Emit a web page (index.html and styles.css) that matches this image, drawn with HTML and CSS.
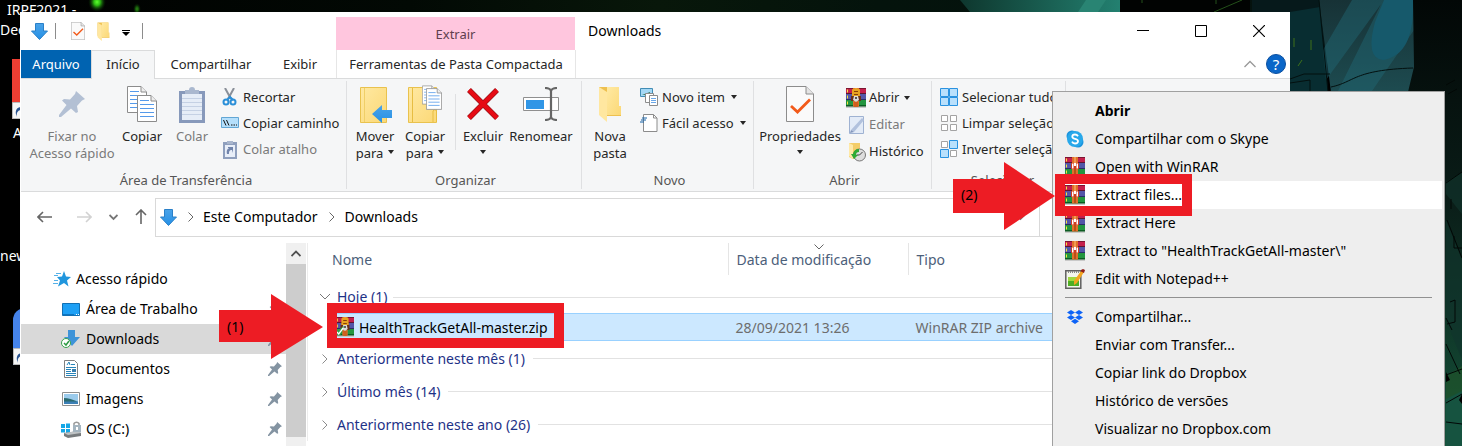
FILE: index.html
```
<!DOCTYPE html>
<html lang="pt-BR">
<head>
<meta charset="utf-8">
<title>Downloads</title>
<link rel="stylesheet" href="styles.css">
</head>
<body>
<svg class="defs" aria-hidden="true">
  <defs>
    <linearGradient id="g-folder" x1="0" y1="0" x2="1" y2="1"><stop offset="0" stop-color="#ffe9a2"/><stop offset="1" stop-color="#fbd876"/></linearGradient>
    <linearGradient id="g-blue" x1="0" y1="0" x2="0" y2="1"><stop offset="0" stop-color="#4aa3e8"/><stop offset="1" stop-color="#2590e6"/></linearGradient>
    <symbol id="i-down" viewBox="0 0 17 17"><path d="M4.500.5h8v7.500h4L8.500 16.500.5 8h4z" fill="url(#g-blue)" stroke="#2a80c8"/></symbol>
    <symbol id="i-rar" viewBox="0 0 20 20">
      <path d="M0 17.500h20V20H0z" fill="#c9c9c9"/>
      <path d="M0 0h20v6H0z" fill="#c41f4c"/><path d="M0 0h20v1H0z" fill="#7c1531"/><path d="M0 5h20v1H0z" fill="#5e1630"/>
      <path d="M0 6h20v6H0z" fill="#5356a8"/><path d="M0 11h20v1H0z" fill="#2b2d68"/>
      <path d="M0 12h20v6H0z" fill="#23953f"/><path d="M0 17h20v1.500H0z" fill="#0d5c22"/>
      <path d="M1 1.500h1v3H1zM1 7.500h1v3H1zM1 13.500h1v3H1z" fill="#f4e43a"/>
      <path d="M7 0h6v18.500H7z" fill="#e0702a"/><path d="M9 0h2v6H9z" fill="#f29a50"/>
      <path d="M6 6h8v6H6z" fill="#cf3d20"/><path d="M7 6.500h1.500v5H7zM11.500 6.500H13v5h-1.500zM9 6h2v3H9z" fill="#fff"/>
      <path d="M9 12h2v6H9z" fill="#b85018"/>
    </symbol>
    <symbol id="i-rarlock" viewBox="0 0 20 20">
      <use href="#i-rar"/>
      <path d="M6 1.500Q10-1 14 1.500V9H6z" fill="#e7a321"/><path d="M8 3h4v1H8zM8 6h4v1H8z" fill="#8a3d08"/>
      <path d="M5 8h10v5H5z" fill="#6b3019"/><path d="M8 8h4l1 4-3 2-3-2z" fill="#dcdcdc"/><path d="M9 9h2v2H9z" fill="#555"/>
      <path d="M8 14h4v5H8z" fill="#ce5f1e"/>
    </symbol>
    <symbol id="i-doccheck" viewBox="0 0 28 36">
      <path d="M.5.5h19.500l7.500 7.500v27.500H.5z" fill="#fafafa" stroke="#8c8c8c"/><path d="M20 .5V8h7.500" fill="#e4e4e4" stroke="#8c8c8c"/>
      <path d="M5 20l6.500 6L24 13.500" fill="none" stroke="#f25a1a" stroke-width="2.800"/>
    </symbol>
    <symbol id="i-folder" viewBox="0 0 24 36">
      <path d="M1 1h20v27h2v2H9L1 26z" fill="#eec04f"/><path d="M9 1h12v19h2v9H9z" fill="url(#g-folder)"/><path d="M1 1l8 5v30l-8-7z" fill="#ffe7a0"/>
    </symbol>
    <symbol id="i-page" viewBox="0 0 20 27">
      <path d="M.5.5H14l5.500 5.500v20.500H.5z" fill="#fff" stroke="#8c8c8c"/><path d="M14 .5V6h5.500" fill="#eee" stroke="#8c8c8c"/>
      <path d="M3 5.500h9M3 9.500h14M3 13.500h14M3 17.500h14M3 21.500h14" stroke="#559aea"/>
    </symbol>
    <symbol id="i-pin" viewBox="0 0 26 26"><path d="M17 0l9 8-3 1.500-5 5.500 1 6-2 1-5-4.500L2 26H0v-2l7.500-10L3 9.500 5 8l6 .5L16 3z"/></symbol>
    <symbol id="i-shortcut" viewBox="0 0 16 17"><path d="M.5.5h15v16H.5z" fill="#f5f5f5" stroke="#bbb"/><path d="M5 15C2 9 5 5 9 5V2l6 5-6 4V8c-3 0-5 3-4 7z" fill="#28518f"/></symbol>
    <symbol id="i-chev" viewBox="0 0 8 12"><path d="M1.500 1.500L6 6l-4.500 4.500" fill="none" stroke="currentColor"/></symbol>
  </defs>
</svg>

<svg class="wallpaper" viewBox="0 0 1462 446" preserveAspectRatio="xMaxYMin slice" aria-hidden="true">
  <defs>
    <linearGradient id="w-top" x1="0" x2="1" y1="0" y2="0"><stop offset="0" stop-color="#000"/><stop offset=".28" stop-color="#020904"/><stop offset=".45" stop-color="#08170a"/><stop offset=".6" stop-color="#04130c"/><stop offset="1" stop-color="#05110f"/></linearGradient>
    <linearGradient id="w-teal" x1="0" x2="1" y1="0" y2="0"><stop offset="0" stop-color="#0e372e"/><stop offset="1" stop-color="#238070"/></linearGradient>
    <linearGradient id="w-sky" x1="0" x2="0" y1="0" y2="1"><stop offset="0" stop-color="#173236"/><stop offset="1" stop-color="#1d4b50"/></linearGradient>
    <linearGradient id="w-side" x1="0" x2="0" y1="0" y2="1"><stop offset="0" stop-color="#020706"/><stop offset=".45" stop-color="#0a1d18"/><stop offset=".7" stop-color="#0f3527"/><stop offset="1" stop-color="#15523a"/></linearGradient>
    <radialGradient id="w-glow"><stop offset="0" stop-color="#5cff2e"/><stop offset=".35" stop-color="#2cba12"/><stop offset="1" stop-color="#062404" stop-opacity="0"/></radialGradient>
  </defs>
  <rect width="1462" height="446" fill="#000"/>
  <rect width="1462" height="12" fill="url(#w-top)"/>
  <ellipse cx="97" cy="2" rx="9" ry="10" fill="url(#w-glow)"/><ellipse cx="137" cy="9" rx="4" ry="6" fill="url(#w-glow)" opacity=".5"/>
  <path d="M960 0h160v12H970z" fill="url(#w-teal)"/><path d="M1086 0h20l-8 12h-20z" fill="#298473"/>
  <path d="M1120 0h130v12h-130z" fill="#010302"/><path d="M1214 12l28-12M1142 0v3M1216 0v4" stroke="#24501a" fill="none"/>
  <path d="M1252 0h75v92h-75z" fill="#06191b"/>
  <path d="M1290 12l30-5 8 84h-38z" fill="#082d31"/>
  <path d="M1319 0h96v92h-84z" fill="url(#w-sky)"/>
  <path d="M1352 0h32l-58 80-3-30zM1383 0h31v30l-42 61h-34z" fill="#216875" opacity=".45"/>
  <path d="M1384 0h29q2 55-30 60-18-2-8-38z" fill="#16596b"/>
  <path d="M1319 0l9 92M1290 79l14-5h26M1310 92v-12l-20 3M1331 87c24-5 22-17 82-19" fill="none" stroke="#03100f"/>
  <path d="M1294 38v9M1311 40v10M1298 66l4-6" stroke="#3e711b"/>
  <path d="M1413 0h49v446h-26V92h-28l6-25z" fill="url(#w-side)"/>
  <path d="M1446 182l16-10v42l-16-20zM1446 220l16 40v100l-16-40z" fill="#11342c" opacity=".65"/>
  <path d="M1446 376l16-10v80h-16z" fill="#235a27" opacity=".5"/><path d="M1446 399l16-8v55h-16z" fill="#165340"/>
  <path d="M1446 183l16-11M1447 220l15 38M1454 236v12h8M1451 199v10M1446 344l14 30M1450 302l5-2v22l-8 2M1446 318l6 12M1446 375l16-6M1446 403l16-9M1446 422l16 2M1446 85l9-5M1448 94l9-5" fill="none" stroke="#020806"/>
  <path d="M1446 372l4 8-4 2zM1462 394l-3 6 3 4z" fill="#000"/>
</svg>

<div class="desk-icon desk-a"><span>IRPF2021 -</span><span>Dec</span></div>
<div class="tile tile-red"><svg width="16" height="17"><use href="#i-shortcut"/></svg></div>
<span class="desk-icon desk-b">A</span>
<span class="desk-icon desk-c">new</span>
<div class="tile tile-blue"><svg width="16" height="17"><use href="#i-shortcut"/></svg></div>

<main class="window">
  <header class="titlebar">
    <div class="quick">
      <svg width="17" height="17"><use href="#i-down"/></svg><i class="qsep"></i>
      <button aria-label="Propriedades"><svg width="14" height="18"><use href="#i-doccheck"/></svg></button>
      <button aria-label="Nova pasta"><svg width="13" height="19" viewBox="0 0 24 36" preserveAspectRatio="none"><use href="#i-folder"/></svg></button>
      <button aria-label="Personalizar"><svg width="8" height="6"><path d="M0 0h8v1H0zM0 2h8L4 6z"/></svg></button><i class="qsep"></i>
    </div>
    <div class="context">Extrair</div>
    <h1>Downloads</h1>
    <div class="controls">
      <button aria-label="Minimizar"><svg width="12" height="12"><path d="M0 5.500h12" stroke="#000"/></svg></button>
      <button aria-label="Maximizar"><svg width="12" height="12"><path d="M.5.5h11v11H.5z" fill="none" stroke="#000"/></svg></button>
      <button aria-label="Fechar"><svg width="12" height="12"><path d="M0 0l12 12M12 0L0 12" stroke="#000" stroke-width="1.200"/></svg></button>
    </div>
  </header>

  <nav class="tabs">
    <button class="tab-file">Arquivo</button>
    <button class="tab-on">Início</button>
    <button class="tab-share">Compartilhar</button>
    <button class="tab-view">Exibir</button>
    <button class="tab-zip">Ferramentas de Pasta Compactada</button>
    <button class="collapse" aria-label="Recolher"><svg width="12" height="8"><path d="M.5 7L6 1.500 11.500 7" fill="none" stroke="#999" stroke-width="1.300"/></svg></button>
    <button class="help" aria-label="Ajuda">?</button>
  </nav>

  <section class="ribbon">
    <div class="group g-clip">
      <div class="tools">
        <button class="big w92 off"><span class="pic"><svg width="26" height="26" fill="#b3c0d4"><use href="#i-pin"/></svg></span>Fixar no<br>Acesso rápido</button>
        <button class="big w48"><span class="pic"><svg width="30" height="37"><use href="#i-page" width="20" height="27"/><use href="#i-page" x="10" y="9" width="20" height="27"/></svg></span>Copiar</button>
        <button class="big w52 off"><span class="pic"><svg width="26" height="37"><path d="M0 5h26v32H0z" fill="#8799bb"/><path d="M3 8h20v26H3z" fill="#e6edf7"/><path d="M3 12.500h20M3 16.500h20M3 20.500h20M3 24.500h20M3 28.500h20" stroke="#c5d1e4"/><path d="M6 4h4a3 3 0 0 1 6 0h4v4H6z" fill="#aab8cf"/></svg></span>Colar</button>
        <div class="stack">
          <button><svg width="18" height="18"><path d="M4 0l6 11M13 0L7 11" stroke="#8a9099" stroke-width="2" fill="none"/><circle cx="5" cy="14" r="2.500" fill="none" stroke="#2b8fd8" stroke-width="2"/><circle cx="12" cy="14" r="2.500" fill="none" stroke="#2b8fd8" stroke-width="2"/><path d="M6 12l3-3 3 3" fill="none" stroke="#2b8fd8" stroke-width="2"/></svg>Recortar</button>
          <button><svg width="18" height="12"><path d="M.5.5h17v10H.5z" fill="#b5dffb" stroke="#62a6d4"/><path d="M2.500 3L5 8.500M5.500 3L8 8.500M10 8h1.500M12.500 8H14M15 8h1" stroke="#111" fill="none"/></svg>Copiar caminho</button>
          <button class="off"><svg width="18" height="19"><path d="M2 2h14v17H2z" fill="#8f9fbd"/><path d="M4 5h10v12H4z" fill="#e8eef8"/><path d="M6 1h6v3H6z" fill="#a9b6cd"/><path d="M6 14c-1-4 1-6 3-6H7V7h5v6l-1-3c-3 0-3 2-3 4z" fill="#7184ab"/></svg>Colar atalho</button>
        </div>
      </div>
      <h2>Área de Transferência</h2>
    </div>
    <div class="group g-org">
      <div class="tools">
        <button class="big w50"><span class="pic"><svg width="34" height="38"><path d="M2.500 2.500h26v35h-26z" fill="url(#g-folder)" stroke="#e9c24e"/><path d="M6.500 3v34" stroke="#f0cf68"/><path d="M14 29l10-9v5h10v8H24v5z" fill="url(#g-blue)"/></svg></span>Mover<br><span>para<i class="caret"></i></span></button>
        <button class="big w50"><span class="pic"><svg width="34" height="38"><path d="M.5 2.500h28v35H.5z" fill="url(#g-folder)" stroke="#e9c24e"/><path d="M4.500 3v34M25 37V26q2-3 3.500 0v11" fill="none" stroke="#e7bd42"/><use href="#i-page" x="14" width="14" height="20"/><use href="#i-page" x="18" y="3" width="16" height="22"/></svg></span>Copiar<br><span>para<i class="caret"></i></span></button>
        <i class="vline"></i>
        <button class="big w50"><span class="pic"><svg width="32" height="32"><path d="M2 2l28 28M30 2L2 30" stroke="#9c1118" stroke-width="5.500"/><path d="M2 2l28 28M30 2L2 30" stroke="#e60b14" stroke-width="4"/></svg></span>Excluir<br><i class="caret"></i></button>
        <button class="big w66"><span class="pic"><svg width="36" height="34"><path d="M.5 10.500h35v13H.5z" fill="#fff" stroke="#8f8f8f"/><path d="M3 13h18v9H3z" fill="#3196e6"/><path d="M22 1q5 0 6 3 1-3 6-3M28 3v28M22 33q5 0 6-3 1 3 6 3" fill="none" stroke="#666" stroke-width="2.200"/></svg></span>Renomear</button>
      </div>
      <h2>Organizar</h2>
    </div>
    <div class="group g-new">
      <div class="tools">
        <button class="big w48"><span class="pic"><svg width="24" height="36"><use href="#i-folder"/></svg></span>Nova<br>pasta</button>
        <div class="stack">
          <button><svg width="18" height="18"><path d="M.5.5h12v8H.5z" fill="#a5d8f5" stroke="#428db5"/><path d="M2 7h8V4z" fill="#2e7757"/><path d="M5.500 5.500h8v9h-8z" fill="#fff" stroke="#8c8c8c"/><path d="M9.500 7.500h8v10h-8z" fill="#fff" stroke="#8c8c8c"/><path d="M11 10.500h5M11 12.500h5M11 14.500h5" stroke="#6aa7e8"/></svg>Novo item<i class="caret"></i></button>
          <button><svg width="18" height="18"><path d="M3.500.5h10l3.500 3.500v13.500H3.500z" fill="#fff" stroke="#8c8c8c"/><path d="M13.500.5V4H17" fill="none" stroke="#8c8c8c"/><path d="M2 4h5M1 6h5M0 8h4" stroke="#1663a8"/></svg>Fácil acesso<i class="caret"></i></button>
        </div>
      </div>
      <h2>Novo</h2>
    </div>
    <div class="group g-open">
      <div class="tools">
        <button class="big w84"><span class="pic"><svg width="28" height="36"><use href="#i-doccheck"/></svg></span>Propriedades<br><i class="caret"></i></button>
        <div class="stack">
          <button><svg width="20" height="20"><use href="#i-rarlock"/></svg>Abrir<i class="caret"></i></button>
          <button class="off"><svg width="20" height="18"><path d="M3.500.5h14v17h-14z" fill="#e3ebf7" stroke="#9fb2d2"/><path d="M5 14L16 2l2 2L8 16z" fill="#b1c1dd"/><path d="M5 14l-1 3 4-1z" fill="#8296bc"/></svg>Editar</button>
          <button><svg width="20" height="20"><path d="M3 1h11v14l-7 2-4-2z" fill="#f3cd69"/><path d="M3 1l4 2v14l-4-3z" fill="#ffe9a8"/><circle cx="13.500" cy="13" r="6" fill="#ddd" stroke="#777"/><path d="M13.500 13l3-3M13.500 13h-3" stroke="#444"/><path d="M7 12q1-5 6-5v3q-3 0-3 3h2l-4 4-3-5z" fill="#2eab34"/></svg>Histórico</button>
        </div>
      </div>
      <h2>Abrir</h2>
    </div>
    <div class="group g-sel">
      <div class="tools">
        <div class="stack">
          <button><svg width="18" height="18" fill="#b9e0fc" stroke="#2a92e0"><path d="M.5.5h8v8h-8zM9.500.5h8v8h-8zM.5 9.500h8v8h-8zM9.500 9.500h8v8h-8z"/></svg>Selecionar tudo</button>
          <button><svg width="18" height="18" fill="#fff" stroke="#a3a3a3"><path d="M1.500 1.500h6v6h-6zM10.500 1.500h6v6h-6zM1.500 10.500h6v6h-6zM10.500 10.500h6v6h-6z"/></svg>Limpar seleção</button>
          <button><svg width="18" height="18" fill="#fff" stroke="#a3a3a3"><path d="M1.500 1.500h6v6h-6zM10.500 10.500h6v6h-6z"/><path d="M9.500.5h8v8h-8zM.5 9.500h8v8h-8z" fill="#b9e0fc" stroke="#2a92e0"/></svg>Inverter seleção</button>
        </div>
      </div>
      <h2>Selecionar</h2>
    </div>
  </section>

  <div class="address">
    <button aria-label="Voltar"><svg width="16" height="12"><path d="M6 1L1 6l5 5M1 6h14" fill="none" stroke="#666" stroke-width="1.600"/></svg></button>
    <button aria-label="Avançar"><svg width="16" height="12"><path d="M10 1l5 5-5 5M15 6H1" fill="none" stroke="#d2d2d2" stroke-width="1.600"/></svg></button>
    <button aria-label="Locais recentes"><svg width="9" height="7"><path d="M.5 1l4 4 4-4" fill="none" stroke="#777" stroke-width="1.800"/></svg></button>
    <button aria-label="Acima"><svg width="12" height="16"><path d="M1 6l5-5 5 5M6 1v14" fill="none" stroke="#666" stroke-width="1.600"/></svg></button>
    <div class="path">
      <svg width="17" height="17"><use href="#i-down"/></svg>
      <svg class="crumb" width="8" height="12"><use href="#i-chev"/></svg><a href="#pc">Este Computador</a>
      <svg class="crumb" width="8" height="12"><use href="#i-chev"/></svg><a href="#dl">Downloads</a>
      <button class="path-drop" aria-label="Histórico de locais"><svg width="9" height="7"><path d="M.5 1l4 4 4-4" fill="none" stroke="#777" stroke-width="1.800"/></svg></button>
    </div>
    <button class="refresh" aria-label="Atualizar"></button>
  </div>

  <div class="body">
    <nav class="side">
      <a class="root" href="#q"><svg width="18" height="16"><path d="M11 0l2 5.500 5 .5-4 3.500 1.500 6L11 12l-6 3.500L7 9.500 4 6l5-.5z" fill="#2196dd"/><path d="M3 2.500h5M1 4.500h4M1 9.500h4M0 12.500h5" stroke="#56b1e8"/></svg>Acesso rápido</a>
      <a href="#d"><svg width="20" height="13"><path d="M1.500.5h17v12h-17z" fill="#1ea0f5" stroke="#1170b4"/><path d="M2 11.500h11" stroke="#0c75c2"/><path d="M15 11h1v1h-1zM17 11h1v1h-1z" fill="#fff"/></svg>Área de Trabalho<svg class="pin" width="14" height="14"><use href="#i-pin"/></svg></a>
      <a class="sel" href="#l"><svg width="20" height="18"><path d="M7 0h7v7h5l-8 9-8-9h4z" fill="#3e93d8"/><circle cx="5" cy="13" r="4.500" fill="#fff" stroke="#36a34a"/><path d="M3 13l2 2 3-4" fill="none" stroke="#2e9a43" stroke-width="1.500"/></svg>Downloads<svg class="pin" width="14" height="14"><use href="#i-pin"/></svg></a>
      <a href="#o"><svg width="20" height="18"><path d="M3.500.5h10l3 3v14h-13z" fill="#fff" stroke="#808080"/><path d="M6 5l2-3 1 3M10 4.500h4M5 7.500h10M5 9.500h5M5 11.500h5M5 13.500h10M5 15.500h10" fill="none" stroke="#2884b8"/><path d="M11 9h4v3h-4z" fill="#377eae"/></svg>Documentos<svg class="pin" width="14" height="14"><use href="#i-pin"/></svg></a>
      <a href="#i"><svg width="20" height="14"><path d="M1.500.5h17v13h-17z" fill="#fff" stroke="#8e8e8e"/><path d="M3 2h14v10H3z" fill="#9bcbec"/><path d="M3 6q6 0 14 4v2H3z" fill="#2a6a6f"/><path d="M3 9.500h14V12H3z" fill="#3b7fb5"/></svg>Imagens<svg class="pin" width="14" height="14"><use href="#i-pin"/></svg></a>
      <a href="#c"><svg width="20" height="18"><path d="M0 4h4v4H0zM5 3.500h4V8H5zM0 9h4v3.500H0zM5 9h4v4H5z" fill="#16a7e6"/><path d="M3 13l14-2 3 2v3l-13 2-4-2z" fill="#777b7d"/><path d="M3 13l14-2 3 2-13 2z" fill="#bfc3c5"/><path d="M13 6V3.500a3 3 0 0 1 5 0V6" fill="none" stroke="#999" stroke-width="1.500"/><path d="M12 5h8v7h-8z" fill="#a4b4bf"/><path d="M15 7h2v3h-2z" fill="#fff"/></svg>OS (C:)<svg class="pin" width="14" height="14"><use href="#i-pin"/></svg></a>
    </nav>
    <div class="scroll"><svg width="10" height="7"><path d="M.5 6L5 1.500 9.500 6" fill="none" stroke="#505050" stroke-width="1.800"/></svg><i></i></div>
    <table class="files">
      <thead><tr><th class="c-name"><span>Nome</span></th><th class="c-date"><span>Data de modificação<svg width="10" height="6"><path d="M.5.5L5 5 9.500.5" fill="none" stroke="#666"/></svg></span></th><th><span>Tipo</span></th></tr></thead>
      <tbody>
        <tr><th colspan="3"><div class="head open"><svg width="12" height="8"><path d="M1 1l5 5 5-5" fill="none" stroke="#777"/></svg>Hoje (1)</div></th></tr>
        <tr class="file"><td><div class="fname"><svg width="18" height="20" viewBox="0 0 20 20" preserveAspectRatio="none"><use href="#i-rarlock"/><path d="M0 12h4l5-3-4 9H0z" fill="#2fa447"/><path d="M1 15l2 2 5-6" stroke="#fff" fill="none" stroke-width="1.500"/></svg>HealthTrackGetAll-master.zip</div></td><td><div>28/09/2021 13:26</div></td><td><div>WinRAR ZIP archive</div></td></tr>
        <tr><th colspan="3"><div class="head"><svg width="8" height="12"><use href="#i-chev"/></svg>Anteriormente neste mês (1)</div></th></tr>
        <tr><th colspan="3"><div class="head"><svg width="8" height="12"><use href="#i-chev"/></svg>Último mês (14)</div></th></tr>
        <tr><th colspan="3"><div class="head"><svg width="8" height="12"><use href="#i-chev"/></svg>Anteriormente neste ano (26)</div></th></tr>
      </tbody>
    </table>
  </div>
</main>

<div class="menu" role="menu">
  <button class="bold" role="menuitem"><span></span>Abrir</button>
  <button role="menuitem"><span><svg width="18" height="18"><circle cx="6" cy="6" r="5.500" fill="#1b93dd"/><circle cx="12" cy="12" r="5.500" fill="#1b93dd"/><circle cx="9" cy="9" r="8" fill="#28a8ea"/><path d="M12 6.200Q11 4.500 9 4.500 6.300 4.500 6.300 6.500 6.300 8.300 9 8.900 12 9.500 12 11.300 12 13.500 9 13.500 6.800 13.500 6 11.700" fill="none" stroke="#fff" stroke-width="1.800"/></svg></span>Compartilhar com o Skype</button>
  <button role="menuitem"><span><svg width="20" height="20"><use href="#i-rar"/></svg></span>Open with WinRAR</button>
  <button class="hot" role="menuitem"><span><svg width="20" height="20"><use href="#i-rar"/></svg></span>Extract files...</button>
  <button role="menuitem"><span><svg width="20" height="20"><use href="#i-rar"/></svg></span>Extract Here</button>
  <button role="menuitem"><span><svg width="20" height="20"><use href="#i-rar"/></svg></span>Extract to "HealthTrackGetAll-master\"</button>
  <button role="menuitem"><span><svg width="20" height="20"><path d="M.8 1.800h15v17.500H.8z" fill="#f3f6ec" stroke="#606060" stroke-width="1.500"/><path d="M3 8h11v9H3z" fill="#9fd840"/><path d="M3 12h11v5H3z" fill="#4fae25"/><path d="M3 3h11" stroke="#888" stroke-dasharray="1 1" stroke-width="2"/><path d="M16 2l3 1-7 11-3 2V12z" fill="#f3a51f"/><path d="M16 1l2-1 2 1-1 3-3-1.500z" fill="#8e1d18"/></svg></span>Edit with Notepad++</button>
  <hr>
  <button role="menuitem"><span><svg width="16" height="14" fill="#0d63f7"><path d="M4 0l4 2.500L4 5 0 2.500zM12 0l4 2.500L12 5 8 2.500zM4 5l4 2.500L4 10 0 7.500zM12 5l4 2.500-4 2.500-4-2.500zM8 8.800l4 2.500L8 14l-4-2.700z"/></svg></span>Compartilhar...</button>
  <button role="menuitem"><span></span>Enviar com Transfer...</button>
  <button role="menuitem"><span></span>Copiar link do Dropbox</button>
  <button role="menuitem"><span></span>Histórico de versões</button>
  <button role="menuitem"><span></span>Visualizar no Dropbox.com</button>
</div>

<div class="arrow arrow-1"><svg width="104" height="66" viewBox="0 0 104 66"><path d="M0 16h52V0l52 33-52 32V48H0z" fill="#ed1c24"/></svg><span>(1)</span></div>
<div class="frame frame-1"></div>
<div class="arrow arrow-2"><svg width="104" height="68" viewBox="0 0 104 68"><path d="M0 17h51V0l51 34-51 34V51H0z" fill="#ed1c24"/></svg><span>(2)</span></div>
<div class="frame frame-2"></div>
</body>
</html>
```
FILE: styles.css
```
* { box-sizing: border-box; }
html, body { height: 100%; }
body {
  margin: 0; position: relative; overflow: hidden; background: #000;
  font: 14px/20px "Noto Sans", "Open Sans", sans-serif; color: #000;
}
button { font: inherit; color: inherit; background: none; border: 0; padding: 0; margin: 0; }
a { color: inherit; text-decoration: none; }
h1, h2 { margin: 0; font-weight: 400; font-size: inherit; }
svg { display: block; flex: none; }
.defs { position: absolute; width: 0; height: 0; }

/* desktop */
.wallpaper { position: absolute; inset: 0; width: 100%; height: 100%; }
.desk-icon { position: absolute; color: #fff; white-space: nowrap; }
.desk-a { top: 0; left: 0; display: flex; flex-direction: column; }
.desk-a span:first-child { padding-left: 7px; }
.desk-b { left: 13px; top: 123px; }
.desk-c { left: 0; top: 246px; }
.tile { position: absolute; left: 12px; width: 48px; height: 60px; display: flex; align-items: flex-end; }
.tile-red { top: 59px; background: #ee3e33; }
.tile-blue { top: 308px; left: 13px; height: 57px; background: #4583ea; border-radius: 12px 12px 0 0; }

/* explorer window */
.window {
  position: absolute; left: 20px; right: 172px; top: 12px; bottom: 0;
  padding-left: 1px; background: #fff; display: flex; flex-direction: column; overflow: hidden;
}
.titlebar { display: flex; height: 38px; flex: none; align-items: center; }
.quick { width: 315px; padding-left: 10px; display: flex; align-items: center; gap: 12px; }
.quick .qsep + button { margin-left: 3px; }
.quick button:nth-of-type(3) { margin-top: 3px; }
.qsep { width: 1px; height: 16px; background: #8c8c8c; margin-left: -5px; }
.quick button + .qsep { margin-left: 0; }
.context { align-self: flex-end; width: 239px; height: 33px; background: #ffc6de; text-align: center; line-height: 34px; font-size: 13px; color: #5f3f4e; }
.titlebar h1 { padding-left: 13px; flex: 1; }
.controls { display: flex; padding-right: 2px; }
.controls button { width: 58px; height: 36px; display: grid; place-items: center; }

.tabs { display: flex; height: 29px; flex: none; font-size: 13px; border-bottom: 1px solid #dadbdc; color: #262626; }
.tabs .tab-file { width: 70px; background: #0063b1; color: #fff; }
.tabs .tab-on { width: 64px; margin-bottom: -1px; padding-bottom: 2px; background: #f5f6f7; border: 1px solid #dadbdc; border-bottom: 0; }
.tab-share { width: 112px; }
.tab-view { width: 66px; }
.tabs .tab-zip { width: 240px; margin-left: 3px; border: solid #e6e6e6; border-width: 0 1px; }
.collapse { margin-left: auto; padding: 0 10px; }
.tabs .help { width: 20px; height: 20px; align-self: center; margin-right: 4px; border-radius: 50%; background: #0a66c8; border: 1px solid #0a4fa0; color: #fff; font-size: 15px; line-height: 18px; }

.ribbon { display: flex; flex: none; height: 113px; background: #f5f6f7; border-bottom: 1px solid #dadbdc; padding: 2px 0; font-size: 13px; line-height: 17px; color: #262626; }
.group { display: flex; flex-direction: column; justify-content: space-between; border-right: 1px solid #dfe0e2; flex: none; padding-top: 3px; white-space: nowrap; }
.group h2 { text-align: center; line-height: 17px; color: #555; }
.g-clip { width: 326px; padding-left: 5px; }
.g-org { width: 235px; padding-left: 3px; }
.g-new { width: 172px; padding-left: 4px; }
.g-open { width: 178px; padding-left: 4px; }
.g-sel { width: 134px; padding-left: 8px; }
.tools { display: flex; align-items: flex-start; }
.big { display: block; text-align: center; flex: none; }
.pic { height: 44px; display: grid; place-items: center; padding-bottom: 4px; }
.off { color: #7a7a7a; }
.w92 { width: 92px; } .w48 { width: 48px; } .w50 { width: 50px; } .w52 { width: 52px; } .w66 { width: 66px; } .w84 { width: 84px; }
.caret { display: inline-block; border: solid transparent; border-top-color: #262626; border-width: 4px 3px 0; margin-left: 5px; vertical-align: 4px; }
br + .caret { margin-left: 0; }
.vline { width: 1px; height: 56px; margin: 10px 2px 0 5px; background: #dfe0e2; }
.stack { display: flex; flex-direction: column; }
.stack button { display: flex; align-items: center; gap: 4px; height: 26px; }
.g-clip .stack { padding-left: 3px; }
.g-new .stack { padding-left: 6px; }
.g-open .stack { padding-left: 4px; }
.g-open .stack button { height: 27px; gap: 3px; }
.stack .caret { margin-left: 2px; }

.address { display: flex; flex: none; height: 51px; align-items: center; padding: 0 0 1px 16px; }
.address > button { margin-right: 17px; }
.address > button:nth-child(1) { margin-right: 23px; }
.address > button:nth-child(4) { margin-right: 8px; }
.path { flex: 1; height: 39px; border: 1px solid #d9d9d9; display: flex; align-items: center; padding-left: 4px; }
.address .refresh { width: 36px; height: 39px; margin-right: 214px; border: solid #d9d9d9; border-width: 1px 1px 1px 0; }
.crumb { margin: 0 8px 0 10px; color: #666; }
.path a + .crumb { margin: 0 9px 0 10px; }
.path-drop { margin-left: auto; padding: 0 14px; }

.body { display: flex; flex: 1; }
.side { width: 265px; padding-top: 21px; flex: none; }
.side a { display: flex; height: 30px; align-items: center; gap: 5px; padding: 0 4px 0 40px; }
.side .root { padding-left: 32px; }
.side .sel { background: #d9d9d9; }
.side .pin { margin-left: auto; fill: #8494a2; }
.scroll { width: 20px; background: #f0f0f0; display: flex; flex-direction: column; align-items: center; padding-top: 7px; flex: none; }
.scroll i { width: 20px; height: 173px; margin-top: 7px; background: #cdcdcd; }

.files { flex: 1; border-collapse: collapse; table-layout: fixed; align-self: flex-start; margin-left: 1px; border-left: 1px solid #ececec; }
.files th, .files td { padding: 0; text-align: left; font-weight: 400; white-space: nowrap; }
.files .c-name { width: 420px; }
.files .c-date { width: 180px; }
.files thead th { height: 38px; vertical-align: top; color: #4c607a; }
.files thead span { display: block; position: relative; height: 32px; line-height: 34px; padding-left: 8px; border-left: 1px solid #e5e5e5; }
.files thead .c-name span { padding-left: 24px; border: 0; }
.files thead svg { position: absolute; left: 85px; top: 1px; }
.head { display: flex; align-items: center; gap: 8px; height: 33px; padding-left: 13px; color: #1e3287; }
.head.open { height: 32px; padding-left: 11px; gap: 6px; }
.head svg { color: #8c8c8c; }
.head::after { content: ""; flex: 1; height: 1px; background: #e2e2e2; }
.files .file td { height: 29px; vertical-align: top; }
.file div { height: 28px; background: #cce8ff; border: solid #99d1ff; border-width: 1px 0; padding-left: 8px; line-height: 27px; color: #6d6d6d; }
.file .fname { display: flex; align-items: center; gap: 5px; margin-left: 22px; padding-left: 6px; color: #000; }

/* context menu */
.menu {
  position: absolute; left: 1052px; right: 17px; top: 91px; bottom: -20px;
  background: #eee; border: 1px solid #a0a0a0; padding: 5px 2px; display: flex; flex-direction: column;
}
.menu button { display: flex; flex: none; align-items: center; height: 28px; text-align: left; white-space: nowrap; }
.menu span { width: 40px; padding-left: 10px; display: grid; justify-items: start; }
.menu span svg[width="18"] { margin-left: 1px; }
.menu span svg[width="16"] { margin-left: 2px; }
.menu .bold { font-weight: 700; }
.menu .hot { background: #fff; }
.menu hr { width: auto; height: 1px; margin: 4px 10px 5px; border: 0; background: #919191; flex: none; }

/* annotations */
.arrow { position: absolute; color: #000; }
.arrow span { position: absolute; left: 8px; top: 23px; font-size: 14px; }
.arrow-1 { left: 219px; top: 294px; }
.arrow-2 { left: 953px; top: 162px; }
.frame { position: absolute; border: 10px solid #ed1c24; }
.frame-1 { left: 327px; top: 303px; width: 237px; height: 45px; }
.frame-2 { left: 1055px; top: 174px; width: 137px; height: 42px; }
```
